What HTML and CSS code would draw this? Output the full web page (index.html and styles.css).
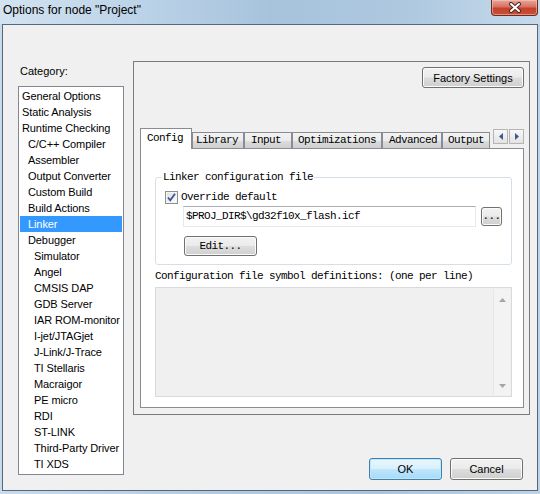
FILE: index.html
```html
<!DOCTYPE html>
<html>
<head>
<meta charset="utf-8">
<link rel="stylesheet" href="styles.css">
</head>
<body>
<div class="titlebar">
  <span class="title">Options for node "Project"</span>
  <div class="close">
    <svg width="14" height="11" viewBox="0 0 14 11">
      <path d="M3 2 L11 9 M11 2 L3 9" stroke="#4a2a24" stroke-width="4" stroke-linecap="round"/>
      <path d="M3 2 L11 9 M11 2 L3 9" stroke="#ffffff" stroke-width="2" stroke-linecap="round"/>
    </svg>
  </div>
</div>
<div class="client">
  <div class="main">
    <div class="left">
      <div class="cat-label">Category:</div>
      <ul class="list">
        <li class="l0">General Options</li>
        <li class="l0">Static Analysis</li>
        <li class="l0">Runtime Checking</li>
        <li class="l1">C/C++ Compiler</li>
        <li class="l1">Assembler</li>
        <li class="l1">Output Converter</li>
        <li class="l1">Custom Build</li>
        <li class="l1">Build Actions</li>
        <li class="l1 sel">Linker</li>
        <li class="l1">Debugger</li>
        <li class="l2">Simulator</li>
        <li class="l2">Angel</li>
        <li class="l2">CMSIS DAP</li>
        <li class="l2">GDB Server</li>
        <li class="l2">IAR ROM-monitor</li>
        <li class="l2">I-jet/JTAGjet</li>
        <li class="l2">J-Link/J-Trace</li>
        <li class="l2">TI Stellaris</li>
        <li class="l2">Macraigor</li>
        <li class="l2">PE micro</li>
        <li class="l2">RDI</li>
        <li class="l2">ST-LINK</li>
        <li class="l2">Third-Party Driver</li>
        <li class="l2">TI XDS</li>
      </ul>
    </div>
    <div class="right">
      <div class="group">
        <div class="btn factory">Factory Settings</div>
        <div class="tabs">
          <div class="tab active t-config">Config</div>
          <div class="tab t-library">Library</div>
          <div class="tab t-input">Input</div>
          <div class="tab t-opt">Optimizations</div>
          <div class="tab t-adv">Advanced</div>
          <div class="tab t-out">Output</div>
          <div class="tabscroll">
            <div class="sbtn"><svg width="4" height="7" viewBox="0 0 4 7"><path d="M4 0 L0 3.5 L4 7 Z" fill="#3d5a8c"/></svg></div>
            <div class="sbtn"><svg width="4" height="7" viewBox="0 0 4 7"><path d="M0 0 L4 3.5 L0 7 Z" fill="#3d5a8c"/></svg></div>
          </div>
        </div>
        <div class="panel">
          <div class="lgroup">
            <span class="legend">Linker configuration file</span>
            <div class="chkrow">
              <span class="chk">
                <svg width="11" height="11" viewBox="0 0 11 11"><path d="M2 5.5 L4.3 8.3 L9 1.8" stroke="#3a5496" stroke-width="1.8" fill="none"/></svg>
              </span>
              <span class="chktext">Override default</span>
            </div>
            <div class="inrow">
              <div class="input">$PROJ_DIR$\gd32f10x_flash.icf</div>
              <div class="btn dots">...</div>
            </div>
            <div class="btn edit">Edit...</div>
          </div>
          <div class="symlabel">Configuration file symbol definitions: (one per line)</div>
          <div class="textarea">
            <div class="vscroll">
              <svg width="7" height="4" viewBox="0 0 7 4"><path d="M0 4 L3.5 0 L7 4 Z" fill="#a5a5a5"/></svg>
              <svg width="7" height="4" viewBox="0 0 7 4"><path d="M0 0 L3.5 4 L7 0 Z" fill="#a5a5a5"/></svg>
            </div>
          </div>
        </div>
      </div>
      <div class="footer">
        <div class="btn ok">OK</div>
        <div class="btn cancel">Cancel</div>
      </div>
    </div>
  </div>
</div>
</body>
</html>
```

FILE: styles.css
```css
* { box-sizing: border-box; }

html, body {
  margin: 0;
  padding: 0;
}

body {
  width: 540px;
  height: 494px;
  overflow: hidden;
  background: linear-gradient(to right, #c7dbed 0%, #b2cbe2 40%, #a9c5de 70%, #bcd3e8 100%);
  font-family: "Liberation Sans", Arial, sans-serif;
  font-size: 11px;
  color: #000;
}

.titlebar {
  height: 24px;
  display: flex;
  align-items: flex-start;
  background: linear-gradient(to right, #d3e3f1 0%, #bcd3e8 25%, #a7c3dc 50%, #adc8df 75%, #c6daec 100%);
}

.title {
  padding-left: 3px;
  line-height: 20px;
  font-size: 12px;
  color: #000;
}

.close {
  margin-left: auto;
  margin-right: 2px;
  width: 47px;
  height: 16px;
  border: 1px solid #6e2a21;
  border-top: none;
  border-radius: 0 0 4px 4px;
  background: linear-gradient(#e6a79b 0%, #d8725f 45%, #c4412b 55%, #c94f37 100%);
  box-shadow: inset 0 0 0 1px rgba(255, 210, 200, 0.5);
  display: flex;
  align-items: center;
  justify-content: center;
}

.client {
  margin: 0 2px;
  height: 467px;
  border: 1px solid #56677a;
  background: #f0f0f0;
}

.main {
  display: flex;
  align-items: flex-start;
}

.left {
  margin-left: 15px;
  margin-top: 40px;
}

.cat-label {
  line-height: 13px;
  padding-left: 2px;
}

.list {
  list-style: none;
  margin: 8px 0 0 0;
  padding: 1px;
  width: 106px;
  height: 389px;
  border: 1px solid #828790;
  background: #fff;
}

.list li {
  height: 16px;
  line-height: 16px;
  white-space: nowrap;
  letter-spacing: -0.1px;
}

.list .l0 { padding-left: 2px; }
.list .l1 { padding-left: 8px; }
.list .l2 { padding-left: 14px; }

.list .sel {
  background: #3399ff;
  color: #fff;
}

.right {
  margin-left: 9px;
  margin-top: 36px;
  width: 397px;
  display: flex;
  flex-direction: column;
}

.group {
  width: 397px;
  height: 354px;
  border: 1px solid #7a7a7a;
  padding: 5px 5px 6px 6px;
  display: flex;
  flex-direction: column;
}

.btn {
  display: flex;
  align-items: center;
  justify-content: center;
  border: 1px solid #707070;
  border-radius: 3px;
  background: linear-gradient(#f2f2f2 0%, #ebebeb 48%, #dddddd 52%, #cfcfcf 100%);
  box-shadow: inset 0 0 0 1px #fbfbfb;
  color: #000;
  white-space: nowrap;
}

.factory {
  align-self: flex-end;
  width: 102px;
  height: 21px;
}

.tabs {
  margin-top: 40px;
  height: 20px;
  display: flex;
  align-items: flex-end;
  position: relative;
  z-index: 1;
}

.tab {
  font-family: "Liberation Mono", "Courier New", monospace;
  font-size: 11px;
  letter-spacing: -0.6px;
  height: 16px;
  line-height: 15px;
  border: 1px solid #898c95;
  border-bottom: none;
  background: linear-gradient(#f3f3f3 0%, #ebebeb 50%, #dddddd 51%, #cfcfcf 100%);
  text-align: left;
  white-space: nowrap;
}

.tab.active {
  height: 21px;
  line-height: 19px;
  margin-bottom: -1px;
  background: #fff;
}

.t-config { width: 52px; padding-left: 6px; }
.t-library { width: 52px; padding-left: 3px; }
.t-input { width: 48px; padding-left: 6px; }
.t-opt { width: 90px; padding-left: 5px; }
.t-adv { width: 60px; padding-left: 6px; }
.t-out { width: 48px; padding-left: 5px; }

.tabscroll {
  margin-left: auto;
  align-self: flex-start;
  margin-top: 1px;
  display: flex;
  gap: 1px;
}

.sbtn {
  width: 15px;
  height: 15px;
  border: 1px solid #b5b5b5;
  background: linear-gradient(#f7f7f7, #e3e3e3);
  display: flex;
  align-items: center;
  justify-content: center;
}

.panel {
  width: 384px;
  height: 260px;
  border: 1px solid #898c95;
  background: #fff;
  padding: 28px 11px 0 14px;
  font-family: "Liberation Mono", "Courier New", monospace;
  font-size: 11px;
  letter-spacing: -0.6px;
}

.lgroup {
  position: relative;
  height: 88px;
  border: 1px solid #d5dfe5;
  border-radius: 3px;
  display: flex;
  flex-direction: column;
  align-items: flex-start;
}

.legend {
  position: absolute;
  top: -8px;
  left: 6px;
  padding: 0 1px;
  line-height: 14px;
  background: #fff;
}

.chkrow {
  margin-top: 13px;
  margin-left: 9px;
  display: flex;
  align-items: center;
  height: 13px;
}

.chk {
  width: 13px;
  height: 13px;
  border: 1px solid #8e8f8f;
  background: linear-gradient(135deg, #dcdcdc, #ffffff);
  box-shadow: inset 0 0 0 1px #f4f4f4;
  display: flex;
  align-items: center;
  justify-content: center;
}

.chktext {
  margin-left: 3px;
  line-height: 13px;
}

.inrow {
  margin-top: 2px;
  margin-left: 27px;
  display: flex;
  align-items: flex-start;
}

.input {
  width: 293px;
  height: 21px;
  border: 1px solid #e3e9ef;
  border-top-color: #abadb3;
  background: #fff;
  padding-left: 2px;
  line-height: 19px;
  white-space: nowrap;
}

.dots {
  margin-left: 5px;
  margin-top: 1px;
  width: 21px;
  height: 19px;
  padding-bottom: 2px;
}

.edit {
  margin-top: 9px;
  margin-left: 28px;
  width: 73px;
  height: 20px;
}

.symlabel {
  margin-top: 5px;
  line-height: 13px;
  white-space: nowrap;
}

.textarea {
  margin-top: 4px;
  width: 357px;
  height: 110px;
  border: 1px solid #d8dadf;
  background: #f0f0f0;
  display: flex;
  justify-content: flex-end;
  padding: 1px;
}

.vscroll {
  width: 17px;
  height: 100%;
  background: #f3f3f3;
  border-left: 1px solid #e6e6e6;
  display: flex;
  flex-direction: column;
  align-items: center;
  justify-content: space-between;
  padding: 9px 0 7px;
}

.footer {
  display: flex;
  justify-content: flex-end;
  gap: 8px;
  margin-top: 43px;
  padding-right: 7px;
}

.footer .btn {
  width: 73px;
  height: 22px;
}

.ok {
  border-color: #3c7fb1;
  background: linear-gradient(#eaf6fd 0%, #d9f0fc 48%, #bee6fd 52%, #a7d9f5 100%);
  box-shadow: inset 0 0 0 1px #c4e6f9;
}
```
